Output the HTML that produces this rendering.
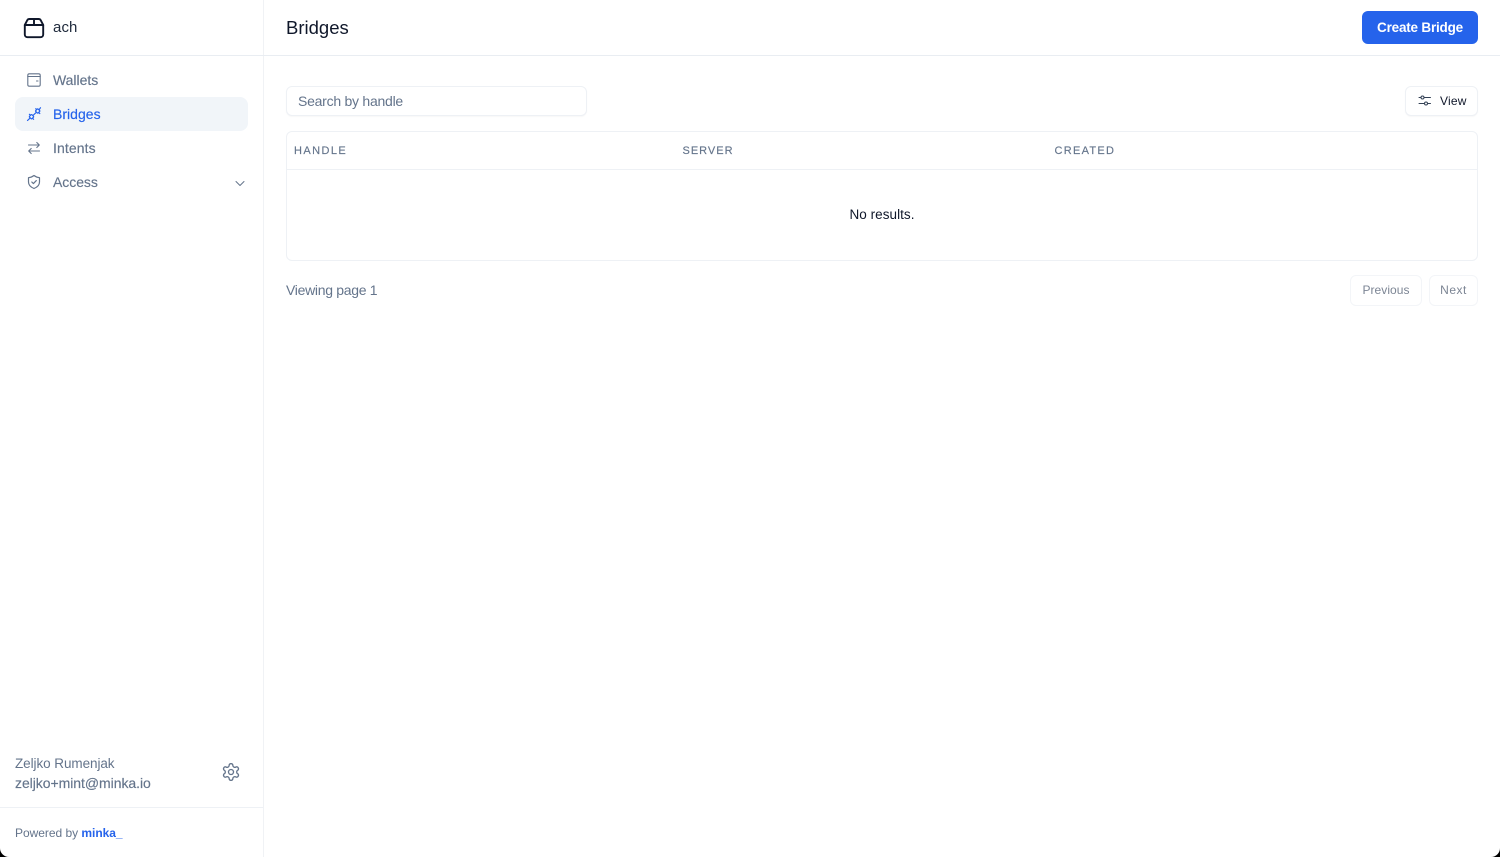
<!DOCTYPE html>
<html lang="en"><head><meta charset="utf-8"><title>Bridges</title>
<style>
html,body{margin:0;padding:0;width:1500px;height:857px;overflow:hidden;background:#000;}
*{box-sizing:border-box;}
#app{position:absolute;left:0;top:0;width:1500px;height:857px;background:#fff;border-radius:0 0 9px 9px;overflow:hidden;font-family:"Liberation Sans",sans-serif;}
.t{position:absolute;white-space:nowrap;line-height:20px;}
.l{position:absolute;background:#e9edf2;}
svg{position:absolute;fill:none;stroke-linecap:round;stroke-linejoin:round;}
.nav{font-size:14px;color:#64748b;left:53px;-webkit-text-stroke:.15px #64748b;}
.h{font-size:11px;color:#64748b;top:141px;-webkit-text-stroke:.15px #64748b;}
.box{position:absolute;background:#fff;border:1px solid #eef1f5;border-radius:6px;}
</style></head><body><div id="app">
<div class="l" style="left:263px;top:0;width:1px;height:857px;background:#f0f2f5"></div>
<div class="l" style="left:0;top:55px;width:1500px;height:1px"></div>
<div class="l" style="left:0;top:807px;width:263px;height:1px;background:#eef1f5"></div>

<svg style="left:22px;top:16px" width="24" height="24" viewBox="0 0 24 24" stroke="#0f172a" stroke-width="1.900"><path d="M2.800 9v9.500a2.700 2.700 0 0 0 2.700 2.700h13a2.700 2.700 0 0 0 2.700-2.700V9"/><path d="M2.800 9l2.500-4.800A2.500 2.500 0 0 1 7.500 3h9a2.500 2.500 0 0 1 2.200 1.200L21.200 9M2.800 9h18.400M12 3v6"/></svg>
<div class="t" style="left:53px;top:18px;font-size:15px;color:#1e293b;letter-spacing:.1px">ach</div>

<div style="position:absolute;left:15px;top:97px;width:233px;height:34px;background:#f1f5f9;border-radius:8px"></div>

<svg style="left:27px;top:73px" width="14" height="14" viewBox="0 0 14 14" stroke="#64748b" stroke-width="1.100"><rect x=".8" y=".8" width="12.400" height="12.400" rx="1.500"/><path d="M.8 3.500h12.400M9.500 8h1.500"/></svg>
<div class="t nav" style="top:70px;letter-spacing:-.03px">Wallets</div>

<svg style="left:26px;top:106px" width="16" height="16" viewBox="0 0 16 16" stroke="#2563eb" stroke-width="1.200"><rect x="3.800" y="9" width="3.400" height="3.400" rx=".8" transform="rotate(45 5.500 10.700)"/><rect x="10" y="3.300" width="3.400" height="3.400" rx=".8" transform="rotate(45 11.700 5)"/><path d="M7.500 9l2.300-2.200M1.500 14.500l2.200-2.100M13.500 3.200l1-1.500M3.400 8.300l1 .9M9.700 2.700l1 .8M6.800 12.500l.8.800M13 6.800l.8.800"/></svg>
<div class="t nav" style="top:104px;color:#2563eb;-webkit-text-stroke:.15px #2563eb;letter-spacing:.02px">Bridges</div>

<svg style="left:26px;top:140px" width="16" height="16" viewBox="0 0 16 16" stroke="#64748b" stroke-width="1.100"><path d="M2.500 5h10.500M10.800 2.500L13.300 5l-2.500 2.500M13.500 11H3M5.200 8.500L2.700 11l2.500 2.500"/></svg>
<div class="t nav" style="top:138px;letter-spacing:.1px">Intents</div>

<svg style="left:26px;top:174px" width="16" height="16" viewBox="0 0 16 16" stroke="#64748b" stroke-width="1.200"><path d="M8 1.500c1.700 1.300 3.500 2 5.500 2.200v4.300c0 3-2.300 5.200-5.500 6.500C4.800 13.200 2.500 11 2.500 8V3.700C4.500 3.500 6.300 2.800 8 1.500z"/><path d="M5.800 8l1.600 1.600 2.900-3"/></svg>
<div class="t nav" style="top:172px;letter-spacing:-.05px">Access</div>
<svg style="left:233px;top:176px" width="14" height="14" viewBox="0 0 14 14" stroke="#64748b" stroke-width="1"><path d="M3 5.500l4 4 4-4"/></svg>

<div class="t" style="left:15px;top:754px;font-size:13.500px;color:#64748b;letter-spacing:-.07px">Zeljko Rumenjak</div>
<div class="t" style="left:15px;top:773px;font-size:14px;color:#64748b;letter-spacing:-.05px;-webkit-text-stroke:.15px #64748b">zeljko+mint@minka.io</div>
<svg style="left:221px;top:762px" width="20" height="20" viewBox="0 0 24 24" stroke="#64748b" stroke-width="1.600"><path d="M12.220 2h-.440a2 2 0 0 0-2 2v.180a2 2 0 0 1-1 1.730l-.430.250a2 2 0 0 1-2 0l-.150-.080a2 2 0 0 0-2.730.730l-.220.380a2 2 0 0 0 .730 2.730l.150.100a2 2 0 0 1 1 1.720v.510a2 2 0 0 1-1 1.740l-.150.090a2 2 0 0 0-.730 2.730l.220.380a2 2 0 0 0 2.730.730l.150-.080a2 2 0 0 1 2 0l.430.250a2 2 0 0 1 1 1.730V20a2 2 0 0 0 2 2h.440a2 2 0 0 0 2-2v-.180a2 2 0 0 1 1-1.730l.430-.250a2 2 0 0 1 2 0l.150.080a2 2 0 0 0 2.730-.730l.220-.390a2 2 0 0 0-.730-2.730l-.150-.080a2 2 0 0 1-1-1.740v-.500a2 2 0 0 1 1-1.740l.150-.090a2 2 0 0 0 .730-2.730l-.220-.380a2 2 0 0 0-2.730-.730l-.150.080a2 2 0 0 1-2 0l-.430-.250a2 2 0 0 1-1-1.730V4a2 2 0 0 0-2-2z"/><circle cx="12" cy="12" r="3"/></svg>
<div class="t" style="left:15px;top:823px;font-size:12px;color:#64748b;letter-spacing:-.03px">Powered by <span style="color:#2563eb;font-weight:700">minka_</span></div>

<div class="t" style="left:286px;top:18px;font-size:18.500px;color:#0f172a;letter-spacing:0">Bridges</div>
<div style="position:absolute;left:1362px;top:11px;width:116px;height:33px;background:#2563eb;border-radius:6px"></div>
<div class="t" style="left:1362px;top:18px;width:116px;text-align:center;font-size:13.500px;font-weight:700;color:#fff;letter-spacing:-.2px">Create Bridge</div>

<div class="box" style="left:286px;top:86px;width:301px;height:30px;box-shadow:0 1px 1px rgba(15,23,42,.03)"></div>
<div class="t" style="left:298px;top:91px;font-size:14px;color:#64748b;letter-spacing:-.25px">Search by handle</div>

<div class="box" style="left:1405px;top:86px;width:73px;height:30px;box-shadow:0 1px 1px rgba(15,23,42,.03)"></div>
<svg style="left:1418px;top:94px" width="14" height="14" viewBox="0 0 14 14" stroke="#334155" stroke-width="1"><path d="M1 3.500h2M6 3.500h6.500M1 9.500h5.500M9.500 9.500h3"/><circle cx="4.500" cy="3.500" r="1.500"/><circle cx="8" cy="9.500" r="1.500"/></svg>
<div class="t" style="left:1440px;top:91px;font-size:12px;color:#0f172a;letter-spacing:.2px">View</div>

<div class="box" style="left:286px;top:131px;width:1192px;height:130px"></div>
<div class="l" style="left:287px;top:169px;width:1190px;height:1px;background:#eef1f5"></div>
<div class="t h" style="left:294px;letter-spacing:1.420px">HANDLE</div>
<div class="t h" style="left:682.500px;letter-spacing:1.000px">SERVER</div>
<div class="t h" style="left:1054.500px;letter-spacing:1.280px">CREATED</div>
<div class="t" style="left:287px;top:205px;width:1190px;text-align:center;font-size:13.500px;color:#0f172a;letter-spacing:.05px">No results.</div>

<div class="t" style="left:286px;top:280px;font-size:14px;color:#64748b;letter-spacing:-.3px">Viewing page 1</div>
<div class="box" style="left:1350px;top:275px;width:72px;height:31px;border-color:#f3f5f8"></div>
<div class="t" style="left:1350px;top:280px;width:72px;text-align:center;font-size:12px;color:#7c8594;letter-spacing:.05px">Previous</div>
<div class="box" style="left:1429px;top:275px;width:49px;height:31px;border-color:#f3f5f8"></div>
<div class="t" style="left:1429px;top:280px;width:49px;text-align:center;font-size:12px;color:#7c8594;letter-spacing:.5px">Next</div>
</div></body></html>
